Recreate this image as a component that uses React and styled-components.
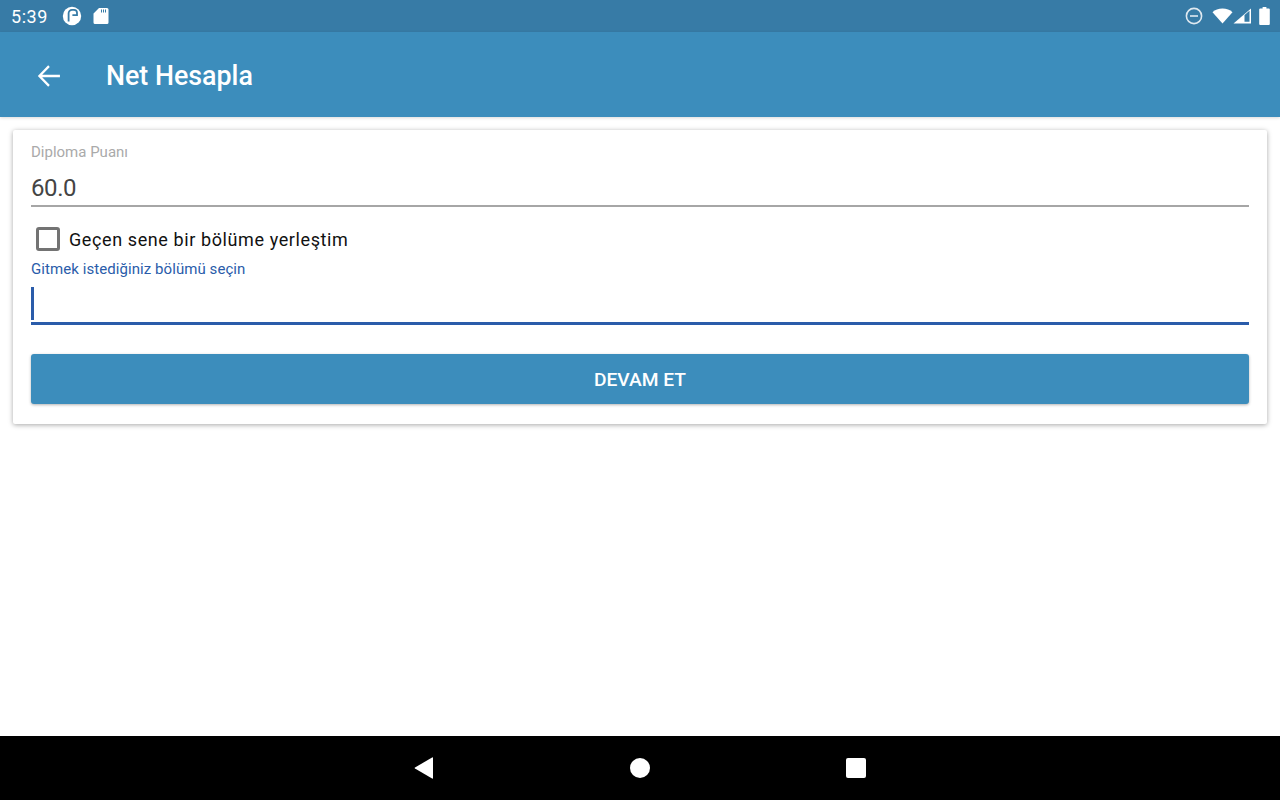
import React from 'react'
import styled, { createGlobalStyle } from 'styled-components'

const GlobalStyle = createGlobalStyle`
  html, body {
    margin: 0;
    padding: 0;
    background: #fff;
    font-family: Roboto, "Noto Sans", sans-serif;
  }
  * { box-sizing: border-box; }
`

export default function App() {
  return (
    <>
      <GlobalStyle />
      <Screen>
        <StatusBar>
          <StatusGroup>
            <Clock>5:39</Clock>
            <StatusIcon $left={14} width="20" height="20" viewBox="0 0 20 20">
              <circle cx="10" cy="10" r="9.2" fill="#fff" />
              <path d="M6.6 15.5V7.2a3.4 3.4 0 0 1 3.4-3.4h2a3 3 0 0 1 3 3v2.4h-4.6" fill="none" stroke="#377ba6" strokeWidth="1.8" />
            </StatusIcon>
            <StatusIcon $left={11} width="16" height="18" viewBox="0 0 16 18">
              <path d="M6 1h8a1.5 1.5 0 0 1 1.5 1.5v13a1.5 1.5 0 0 1-1.5 1.5H2a1.5 1.5 0 0 1-1.5-1.5V6.5z" fill="#fff" />
              <path d="M8 2.5h1v3H8zM10 2.5h1v3h-1zM12 2.5h1v3h-1z" fill="#377ba6" />
            </StatusIcon>
          </StatusGroup>
          <StatusGroup>
            <StatusIcon $left={0} width="18" height="18" viewBox="0 0 18 18">
              <circle cx="9" cy="9" r="7.6" fill="none" stroke="#dfe9f0" strokeWidth="1.6" />
              <rect x="5" y="8.2" width="8" height="1.6" fill="#dfe9f0" />
            </StatusIcon>
            <StatusIcon $left={9} width="21" height="16" viewBox="0 0 21 16">
              <path d="M0.5 4.2C3 2 6.5 0.6 10.5 0.6s7.5 1.4 10 3.6L10.5 15.5z" fill="#fff" />
            </StatusIcon>
            <StatusIcon $left={0} width="19" height="16" viewBox="0 0 19 16">
              <path d="M0.5 15.5L18 0.5v15z" fill="#fff" />
              <path d="M11.5 13.8V7l5-4.3v11.1z" fill="#377ba6" />
            </StatusIcon>
            <StatusIcon $left={7} $right={10} width="11" height="18" viewBox="0 0 11 18">
              <path d="M3.6 0h3.8v1.6h2.4a1 1 0 0 1 1 1V17a1 1 0 0 1-1 1H1.2a1 1 0 0 1-1-1V2.6a1 1 0 0 1 1-1h2.4z" fill="#fff" />
            </StatusIcon>
          </StatusGroup>
        </StatusBar>
        <AppBar>
          <BackButton>
            <svg width="32" height="32" viewBox="0 0 24 24">
              <path d="M20.2 12H5.4M12 4.6L4.8 12l7.2 7.4" fill="none" stroke="#fff" strokeWidth="1.7" />
            </svg>
          </BackButton>
          <Title>Net Hesapla</Title>
        </AppBar>
        <Content>
          <Card>
            <FieldLabel>Diploma Puanı</FieldLabel>
            <FieldValue>60.0</FieldValue>
            <CheckRow>
              <CheckBox />
              <CheckText>Geçen sene bir bölüme yerleştim</CheckText>
            </CheckRow>
            <FieldLabel $focused>Gitmek istediğiniz bölümü seçin</FieldLabel>
            <FocusedInput>
              <Caret />
            </FocusedInput>
            <SubmitButton>DEVAM ET</SubmitButton>
          </Card>
        </Content>
        <NavBar>
          <NavSlot>
            <svg width="20" height="22" viewBox="0 0 20 22">
              <path d="M19 1v20a.6.6 0 0 1-.9.5L1 11.5a.6.6 0 0 1 0-1L18.1.5A.6.6 0 0 1 19 1z" fill="#fff" />
            </svg>
          </NavSlot>
          <NavSlot>
            <HomeDot />
          </NavSlot>
          <NavSlot>
            <RecentSquare />
          </NavSlot>
        </NavBar>
      </Screen>
    </>
  )
}

const Screen = styled.div`
  width: 1280px;
  height: 800px;
  display: flex;
  flex-direction: column;
  overflow: hidden;
`

const StatusBar = styled.div`
  height: 32px;
  flex: none;
  background: #377ba6;
  display: flex;
  align-items: center;
  justify-content: space-between;
  padding-left: 11px;
`

const StatusGroup = styled.div`
  display: flex;
  align-items: center;
`

const StatusIcon = styled.svg`
  flex: none;
  margin-left: ${p => p.$left}px;
  margin-right: ${p => p.$right || 0}px;
`

const Clock = styled.span`
  color: #fff;
  font-size: 18px;
  letter-spacing: 0.55px;
`

const AppBar = styled.div`
  height: 85px;
  flex: none;
  background: #3c8dbc;
  display: flex;
  align-items: center;
  box-shadow: 0 1px 3px rgba(0, 0, 0, 0.15);
  position: relative;
`

const BackButton = styled.div`
  width: 32px;
  height: 32px;
  margin-left: 33px;
  margin-top: 2px;
`

const Title = styled.h1`
  margin: 2px 0 0 41px;
  color: #fff;
  font-size: 26.8px;
  font-weight: 500;
`

const Content = styled.main`
  flex: 1;
  padding: 13px 13px 0;
`

const Card = styled.section`
  background: #fff;
  height: 294px;
  padding: 13px 18px 0;
  border-radius: 2px;
  box-shadow: 0 1px 5px rgba(0, 0, 0, 0.35);
`

const FieldLabel = styled.div`
  margin-top: ${p => (p.$focused ? '6px' : '0')};
  font-size: 15px;
  line-height: 18px;
  letter-spacing: ${p => (p.$focused ? '0.07px' : '0')};
  color: ${p => (p.$focused ? '#2a5caa' : '#aaaaaa')};
`

const FieldValue = styled.div`
  height: 46px;
  padding-top: 12px;
  font-size: 24px;
  line-height: 30px;
  letter-spacing: -0.4px;
  color: #444;
  border-bottom: 2px solid #a6a6a6;
`

const CheckRow = styled.div`
  display: flex;
  align-items: center;
  height: 30px;
  margin-top: 17px;
  padding-left: 5px;
`

const CheckBox = styled.div`
  width: 24px;
  height: 24px;
  border: 3px solid #737373;
  border-radius: 3px;
`

const CheckText = styled.span`
  margin-left: 9px;
  font-size: 18px;
  color: #111;
  letter-spacing: 0.6px;
`

const FocusedInput = styled.div`
  height: 41px;
  margin-top: 6px;
  padding-top: 3px;
  border-bottom: 3px solid #2a5caa;
`

const Caret = styled.div`
  width: 3px;
  height: 33px;
  background: #2a5caa;
`

const SubmitButton = styled.button`
  display: block;
  width: 100%;
  height: 50px;
  margin-top: 29px;
  border: 0;
  border-radius: 3px;
  background: #3c8dbc;
  color: #fff;
  font-family: inherit;
  font-size: 19.2px;
  font-weight: 500;
  box-shadow: 0 1px 3px rgba(0, 0, 0, 0.3);
`

const NavBar = styled.nav`
  height: 64px;
  flex: none;
  background: #000;
  display: flex;
  justify-content: center;
  align-items: center;
  gap: 176px;
`

const NavSlot = styled.div`
  width: 40px;
  display: flex;
  justify-content: center;
  align-items: center;
`

const HomeDot = styled.div`
  width: 20px;
  height: 20px;
  border-radius: 50%;
  background: #fff;
`

const RecentSquare = styled.div`
  width: 20px;
  height: 20px;
  border-radius: 2px;
  background: #fff;
`
